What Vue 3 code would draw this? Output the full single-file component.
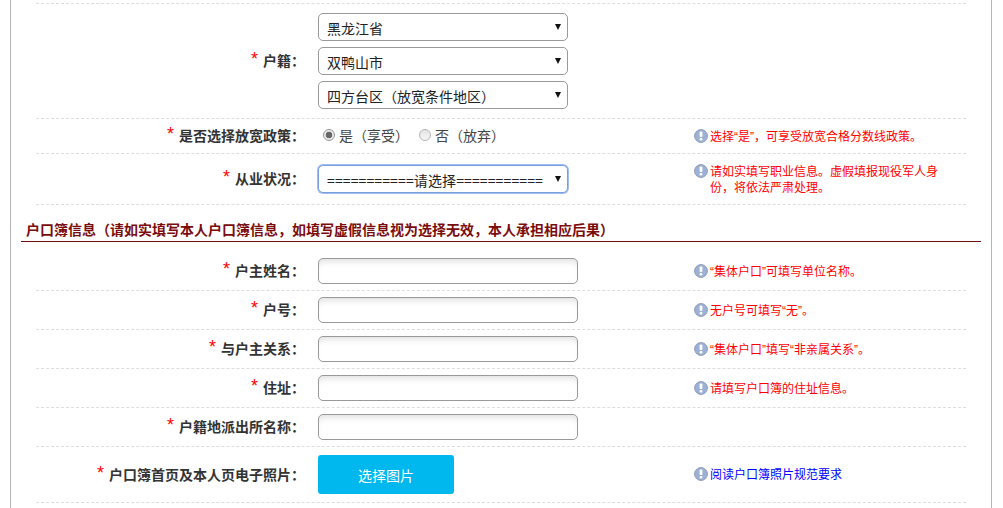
<script setup>
const topRows = [
  { label: '户主姓名：', tip: '“集体户口”可填写单位名称。' },
  { label: '户号：', tip: '无户号可填写“无”。' },
  { label: '与户主关系：', tip: '“集体户口”填写“非亲属关系”。' },
  { label: '住址：', tip: '请填写户口簿的住址信息。' },
  { label: '户籍地派出所名称：', tip: '' }
]
</script>

<template>
  <div class="page">
    <div class="frame">
      <div class="rows">
        <div class="cut"></div>

        <div class="row row-selects">
          <label class="label"><span class="star">*</span>户籍：</label>
          <div class="stack">
            <select class="sel"><option>黑龙江省</option></select>
            <select class="sel"><option>双鸭山市</option></select>
            <select class="sel"><option>四方台区（放宽条件地区）</option></select>
          </div>
        </div>

        <div class="row row-radio">
          <label class="label"><span class="star">*</span>是否选择放宽政策：</label>
          <div class="radios">
            <span class="radio-item"><i class="radio on"></i>是（享受）</span>
            <span class="radio-item"><i class="radio"></i>否（放弃）</span>
          </div>
          <div class="tip">
            <svg class="ico" viewBox="0 0 14 14"><circle cx="7" cy="7" r="6.4" fill="#9db1d6" stroke="#8e9bb5"/><rect x="5.6" y="2.6" width="2.8" height="5.4" rx="1" fill="#fff"/><rect x="5.6" y="9" width="2.8" height="2.6" rx="1" fill="#fff"/></svg>
            <span class="tip-text">选择“是”，可享受放宽合格分数线政策。</span>
          </div>
        </div>

        <div class="row row-job">
          <label class="label"><span class="star">*</span>从业状况：</label>
          <div><select class="sel sel-focus"><option>===========请选择===========</option></select></div>
          <div class="tip">
            <svg class="ico" viewBox="0 0 14 14"><circle cx="7" cy="7" r="6.4" fill="#9db1d6" stroke="#8e9bb5"/><rect x="5.6" y="2.6" width="2.8" height="5.4" rx="1" fill="#fff"/><rect x="5.6" y="9" width="2.8" height="2.6" rx="1" fill="#fff"/></svg>
            <span class="tip-text">请如实填写职业信息。虚假填报现役军人身份，将依法严肃处理。</span>
          </div>
        </div>
      </div>

      <h3 class="heading">户口簿信息（请如实填写本人户口簿信息，如填写虚假信息视为选择无效，本人承担相应后果）</h3>

      <div class="rows">
        <div v-for="r in topRows" :key="r.label" class="row row-input">
          <label class="label"><span class="star">*</span>{{ r.label }}</label>
          <div><input class="inp" type="text" /></div>
          <div v-if="r.tip" class="tip">
            <svg class="ico" viewBox="0 0 14 14"><circle cx="7" cy="7" r="6.4" fill="#9db1d6" stroke="#8e9bb5"/><rect x="5.6" y="2.6" width="2.8" height="5.4" rx="1" fill="#fff"/><rect x="5.6" y="9" width="2.8" height="2.6" rx="1" fill="#fff"/></svg>
            <span class="tip-text">{{ r.tip }}</span>
          </div>
        </div>

        <div class="row row-upload">
          <label class="label"><span class="star">*</span>户口簿首页及本人页电子照片：</label>
          <div><button class="pick" type="button">选择图片</button></div>
          <div class="tip">
            <svg class="ico" viewBox="0 0 14 14"><circle cx="7" cy="7" r="6.4" fill="#9db1d6" stroke="#8e9bb5"/><rect x="5.6" y="2.6" width="2.8" height="5.4" rx="1" fill="#fff"/><rect x="5.6" y="9" width="2.8" height="2.6" rx="1" fill="#fff"/></svg>
            <span class="tip-text link">阅读户口簿照片规范要求</span>
          </div>
        </div>
      </div>
    </div>
  </div>
</template>

<style>
html, body { margin: 0; background: #fff; overflow: hidden; }
</style>

<style scoped>
.page {
  height: 508px;
  overflow: hidden;
  font-family: "Noto Sans CJK SC", "Liberation Sans", sans-serif;
  font-size: 14px;
  color: #333;
}
.frame {
  box-sizing: border-box;
  width: 982px;
  height: 508px;
  margin-left: 10px;
  padding: 0 10px;
  border-left: 1px solid #b5b5b5;
  border-right: 1px solid #b5b5b5;
}
.rows { margin: 0 15px; }
.cut { height: 3px; border-bottom: 1px dashed #ddd; }
.row {
  display: flex;
  align-items: center;
  box-sizing: border-box;
  border-bottom: 1px dashed #ddd;
}
.row-selects { height: 115px; }
.row-radio { height: 35px; }
.row-job { height: 51px; }
.row-input { height: 39px; }
.row-input:first-child { height: 49px; padding-top: 10px; }
.row-upload { height: 56px; }
.label {
  flex: none;
  width: 269px;
  margin-right: 13px;
  padding-bottom: 2px;
  text-align: right;
  font-weight: 700;
  line-height: 20px;
}
.row > div:nth-child(2) { flex: none; width: 376px; }
.star {
  color: #f00;
  font-family: "Liberation Sans", sans-serif;
  font-size: 18px;
  font-weight: 400;
  line-height: 14px;
  margin-right: 5px;
  position: relative;
  top: -1px;
}
.stack { display: flex; flex-direction: column; gap: 6px; }
.sel {
  display: block;
  box-sizing: border-box;
  width: 250px;
  height: 28px;
  padding: 2px 20px 0 8px;
  border: 1px solid #999;
  border-radius: 5px;
  appearance: none;
  background: #fff url("data:image/svg+xml,%3Csvg xmlns='http://www.w3.org/2000/svg' width='6' height='6'%3E%3Cpath d='M0 0h6L3 6z' fill='%23111'/%3E%3C/svg%3E") no-repeat 236px 10px;
  color: #222;
  font-family: inherit;
  font-size: 14px;
  outline: none;
}
.sel-focus { border-color: #7a9fe0; box-shadow: 0 0 0 1px #9fbdf0; letter-spacing: 0.12px; }
.radios { display: flex; gap: 10px; padding-left: 5px; padding-bottom: 2px; box-sizing: border-box; }
.radio-item { display: flex; align-items: center; color: #444; }
.radio {
  box-sizing: border-box;
  width: 12px;
  height: 12px;
  margin-right: 4px;
  border-radius: 50%;
  border: 1px solid #b5b5b5;
  background: linear-gradient(#e4e4e4, #f6f6f6);
}
.radio.on { background: radial-gradient(circle, #666 0 3px, #e8e8e8 3.6px); border-color: #999; }
.tip {
  display: flex;
  align-items: flex-start;
  width: 250px;
  color: #f00;
  font-family: "Liberation Sans", "Noto Sans CJK SC", sans-serif;
  font-size: 12px;
  line-height: 16px;
}
.tip-text { padding-top: 1px; }
.ico { flex: none; width: 14px; height: 14px; margin: 1px 2px 0 0; }
.link { color: #00f; }
.heading {
  margin: 0;
  padding: 15px 5px 3px;
  height: 18px;
  border-bottom: 1px solid #6a0d0d;
  color: #7a0c0c;
  font-size: 14px;
  font-weight: 700;
  line-height: 18px;
  box-sizing: content-box;
}
.inp {
  display: block;
  box-sizing: border-box;
  width: 260px;
  height: 26px;
  padding: 0 6px;
  border: 1px solid #999;
  border-radius: 5px;
  background: #fff;
  box-shadow: inset 0 6px 7px -4px #ddd;
  outline: none;
}
.pick {
  display: block;
  width: 136px;
  height: 39px;
  border: 0;
  border-radius: 3px;
  background: #00b7ee;
  color: #fff;
  font-family: inherit;
  font-size: 14px;
}
</style>
